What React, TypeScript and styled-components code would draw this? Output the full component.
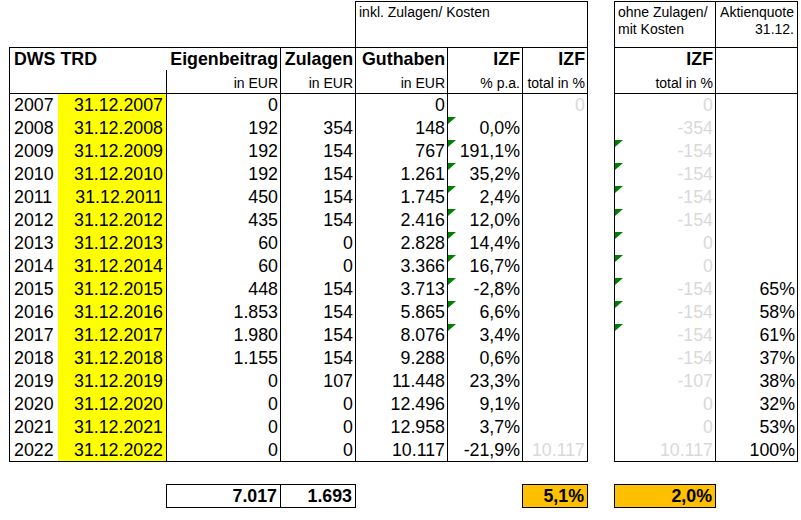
import React from "react";
import styled, { createGlobalStyle, css } from "styled-components";

const GlobalStyle = createGlobalStyle`
  html, body { margin: 0; padding: 0; background: #fff; }
  body { font-family: "Liberation Sans", Arial, sans-serif; color: #000; }
`;

type Borders = { $bl?: boolean; $br?: boolean; $bt?: boolean; $bb?: boolean };

const borders = css<Borders>`
  border-left: ${(p) => (p.$bl ? "1px solid #000" : "0")};
  border-right: ${(p) => (p.$br ? "1px solid #000" : "0")};
  border-top: ${(p) => (p.$bt ? "1px solid #000" : "0")};
  border-bottom: ${(p) => (p.$bb ? "1px solid #000" : "0")};
`;

const Sheet = styled.div`
  margin: 1px 0 0 9px;
  display: grid;
  grid-template-columns: 49px 108px 114px 75px 92px 75px 66px 26px 101px 83px;
  grid-template-rows: 46px 23px 23px repeat(15, 23px) 24px 22px 24px;
`;

const Blank = styled.div<Borders & { $span?: number; $rows?: number }>`
  box-sizing: border-box;
  ${borders};
  grid-column: span ${(p) => p.$span ?? 1};
  grid-row: span ${(p) => p.$rows ?? 1};
`;

const HeadNote = styled.div<Borders & { $span?: number; $right?: boolean }>`
  box-sizing: border-box;
  ${borders};
  grid-column: span ${(p) => p.$span ?? 1};
  padding: 2px 3px 0 3px;
  font-size: 14px;
  line-height: 17px;
  text-align: ${(p) => (p.$right ? "right" : "left")};
  white-space: nowrap;
`;

const TitleCell = styled.div<Borders & { $span?: number; $left?: boolean }>`
  box-sizing: border-box;
  ${borders};
  grid-column: span ${(p) => p.$span ?? 1};
  display: flex;
  align-items: center;
  justify-content: ${(p) => (p.$left ? "flex-start" : "flex-end")};
  padding: 0 2px 0 4px;
  font-size: 17.8px;
  font-weight: bold;
  white-space: nowrap;
`;

const UnitCell = styled.div<Borders & { $span?: number }>`
  box-sizing: border-box;
  ${borders};
  grid-column: span ${(p) => p.$span ?? 1};
  display: flex;
  align-items: flex-end;
  justify-content: flex-end;
  padding: 0 2px 2px 3px;
  font-size: 14px;
  line-height: 16px;
  white-space: nowrap;
`;

const YearCell = styled.div<Borders>`
  box-sizing: border-box;
  ${borders};
  display: flex;
  align-items: center;
  padding: 1px 0 0 4px;
  font-size: 17.8px;
`;

const DateCell = styled.div<Borders>`
  box-sizing: border-box;
  ${borders};
  background: #ffff00;
  display: flex;
  align-items: center;
  justify-content: flex-end;
  padding: 1px 3px 0 0;
  font-size: 17.8px;
`;

const NumCell = styled.div<Borders & { $muted?: boolean; $flag?: boolean }>`
  box-sizing: border-box;
  ${borders};
  position: relative;
  display: flex;
  align-items: center;
  justify-content: flex-end;
  padding: 1px 2px 0 3px;
  font-size: 17.8px;
  white-space: nowrap;
  color: ${(p) => (p.$muted ? "#d9d9d9" : "#000")};
  ${(p) =>
    p.$flag &&
    css`
      &::before {
        content: "";
        position: absolute;
        top: ${p.$bt ? 0 : 1}px;
        left: 0;
        width: 0;
        height: 0;
        border-top: 7px solid #008000;
        border-right: 8px solid transparent;
      }
    `}
`;

const TotalCell = styled.div<Borders & { $fill?: boolean }>`
  box-sizing: border-box;
  ${borders};
  background: ${(p) => (p.$fill ? "#ffc000" : "transparent")};
  display: flex;
  align-items: center;
  justify-content: flex-end;
  padding: 1px 3px 0 3px;
  font-size: 17.8px;
  font-weight: bold;
`;

const Gap = styled.div<{ $span?: number }>`
  grid-column: span ${(p) => p.$span ?? 1};
`;

type Row = {
  year: number;
  eigen: string;
  zul: string;
  gut: string;
  izf: string;
  tot: string;
  ohne: string;
  akt: string;
  f1?: boolean;
  f2?: boolean;
};

const rows: Row[] = [
  { year: 2007, eigen: "0", zul: "", gut: "0", izf: "", tot: "0", ohne: "0", akt: "" },
  { year: 2008, eigen: "192", zul: "354", gut: "148", izf: "0,0%", tot: "", ohne: "-354", akt: "", f1: true },
  { year: 2009, eigen: "192", zul: "154", gut: "767", izf: "191,1%", tot: "", ohne: "-154", akt: "", f1: true, f2: true },
  { year: 2010, eigen: "192", zul: "154", gut: "1.261", izf: "35,2%", tot: "", ohne: "-154", akt: "", f1: true, f2: true },
  { year: 2011, eigen: "450", zul: "154", gut: "1.745", izf: "2,4%", tot: "", ohne: "-154", akt: "", f1: true, f2: true },
  { year: 2012, eigen: "435", zul: "154", gut: "2.416", izf: "12,0%", tot: "", ohne: "-154", akt: "", f1: true, f2: true },
  { year: 2013, eigen: "60", zul: "0", gut: "2.828", izf: "14,4%", tot: "", ohne: "0", akt: "", f1: true, f2: true },
  { year: 2014, eigen: "60", zul: "0", gut: "3.366", izf: "16,7%", tot: "", ohne: "0", akt: "", f1: true, f2: true },
  { year: 2015, eigen: "448", zul: "154", gut: "3.713", izf: "-2,8%", tot: "", ohne: "-154", akt: "65%", f1: true, f2: true },
  { year: 2016, eigen: "1.853", zul: "154", gut: "5.865", izf: "6,6%", tot: "", ohne: "-154", akt: "58%", f1: true, f2: true },
  { year: 2017, eigen: "1.980", zul: "154", gut: "8.076", izf: "3,4%", tot: "", ohne: "-154", akt: "61%", f1: true, f2: true },
  { year: 2018, eigen: "1.155", zul: "154", gut: "9.288", izf: "0,6%", tot: "", ohne: "-154", akt: "37%" },
  { year: 2019, eigen: "0", zul: "107", gut: "11.448", izf: "23,3%", tot: "", ohne: "-107", akt: "38%" },
  { year: 2020, eigen: "0", zul: "0", gut: "12.496", izf: "9,1%", tot: "", ohne: "0", akt: "32%" },
  { year: 2021, eigen: "0", zul: "0", gut: "12.958", izf: "3,7%", tot: "", ohne: "0", akt: "53%" },
  { year: 2022, eigen: "0", zul: "0", gut: "10.117", izf: "-21,9%", tot: "10.117", ohne: "10.117", akt: "100%" },
];

export default function App() {
  return (
    <>
      <GlobalStyle />
      <Sheet>
        {/* top note row */}
        <Gap $span={4} />
        <HeadNote $span={3} $bt $bl $br>
          inkl. Zulagen/ Kosten
        </HeadNote>
        <Gap />
        <HeadNote $bt $bl>
          ohne Zulagen/
          <br />
          mit Kosten
        </HeadNote>
        <HeadNote $bt $bl $br $right>
          Aktienquote
          <br />
          31.12.
        </HeadNote>

        {/* title row */}
        <TitleCell $span={2} $bt $bl $left>
          DWS TRD
        </TitleCell>
        <TitleCell $bt>Eigenbeitrag</TitleCell>
        <TitleCell $bt $bl>Zulagen</TitleCell>
        <TitleCell $bt $bl>Guthaben</TitleCell>
        <TitleCell $bt $bl>IZF</TitleCell>
        <TitleCell $bt $bl $br>IZF</TitleCell>
        <Gap />
        <TitleCell $bt $bl>IZF</TitleCell>
        <Blank $bt $bl $br $rows={2} />

        {/* unit row */}
        <UnitCell $span={2} $bl />
        <UnitCell $bl>in EUR</UnitCell>
        <UnitCell $bl>in EUR</UnitCell>
        <UnitCell $bl>in EUR</UnitCell>
        <UnitCell $bl>% p.a.</UnitCell>
        <UnitCell $bl $br>total in %</UnitCell>
        <Gap />
        <UnitCell $bl>total in %</UnitCell>

        {/* data rows */}
        {rows.map((r, i) => {
          const t = i === 0;
          const b = i === rows.length - 1;
          return (
            <React.Fragment key={r.year}>
              <YearCell $bl $bt={t} $bb={b}>{r.year}</YearCell>
              <DateCell $bt={t} $bb={b}>31.12.{r.year}</DateCell>
              <NumCell $bl $bt={t} $bb={b}>{r.eigen}</NumCell>
              <NumCell $bl $bt={t} $bb={b}>{r.zul}</NumCell>
              <NumCell $bl $bt={t} $bb={b}>{r.gut}</NumCell>
              <NumCell $bl $bt={t} $bb={b} $flag={r.f1}>{r.izf}</NumCell>
              <NumCell $bl $br $bt={t} $bb={b} $muted>{r.tot}</NumCell>
              <Gap />
              <NumCell $bl $bt={t} $bb={b} $muted $flag={r.f2}>{r.ohne}</NumCell>
              <NumCell $bl $br $bt={t} $bb={b}>{r.akt}</NumCell>
            </React.Fragment>
          );
        })}

        {/* spacer row */}
        <Gap $span={10} />

        {/* totals row */}
        <Gap $span={2} />
        <TotalCell $bt $bb $bl>7.017</TotalCell>
        <TotalCell $bt $bb $bl>1.693</TotalCell>
        <Blank $bl />
        <Gap />
        <TotalCell $bt $bb $bl $br $fill>5,1%</TotalCell>
        <Gap />
        <TotalCell $bt $bb $bl $fill>2,0%</TotalCell>
        <Blank $bl />
      </Sheet>
    </>
  );
}
